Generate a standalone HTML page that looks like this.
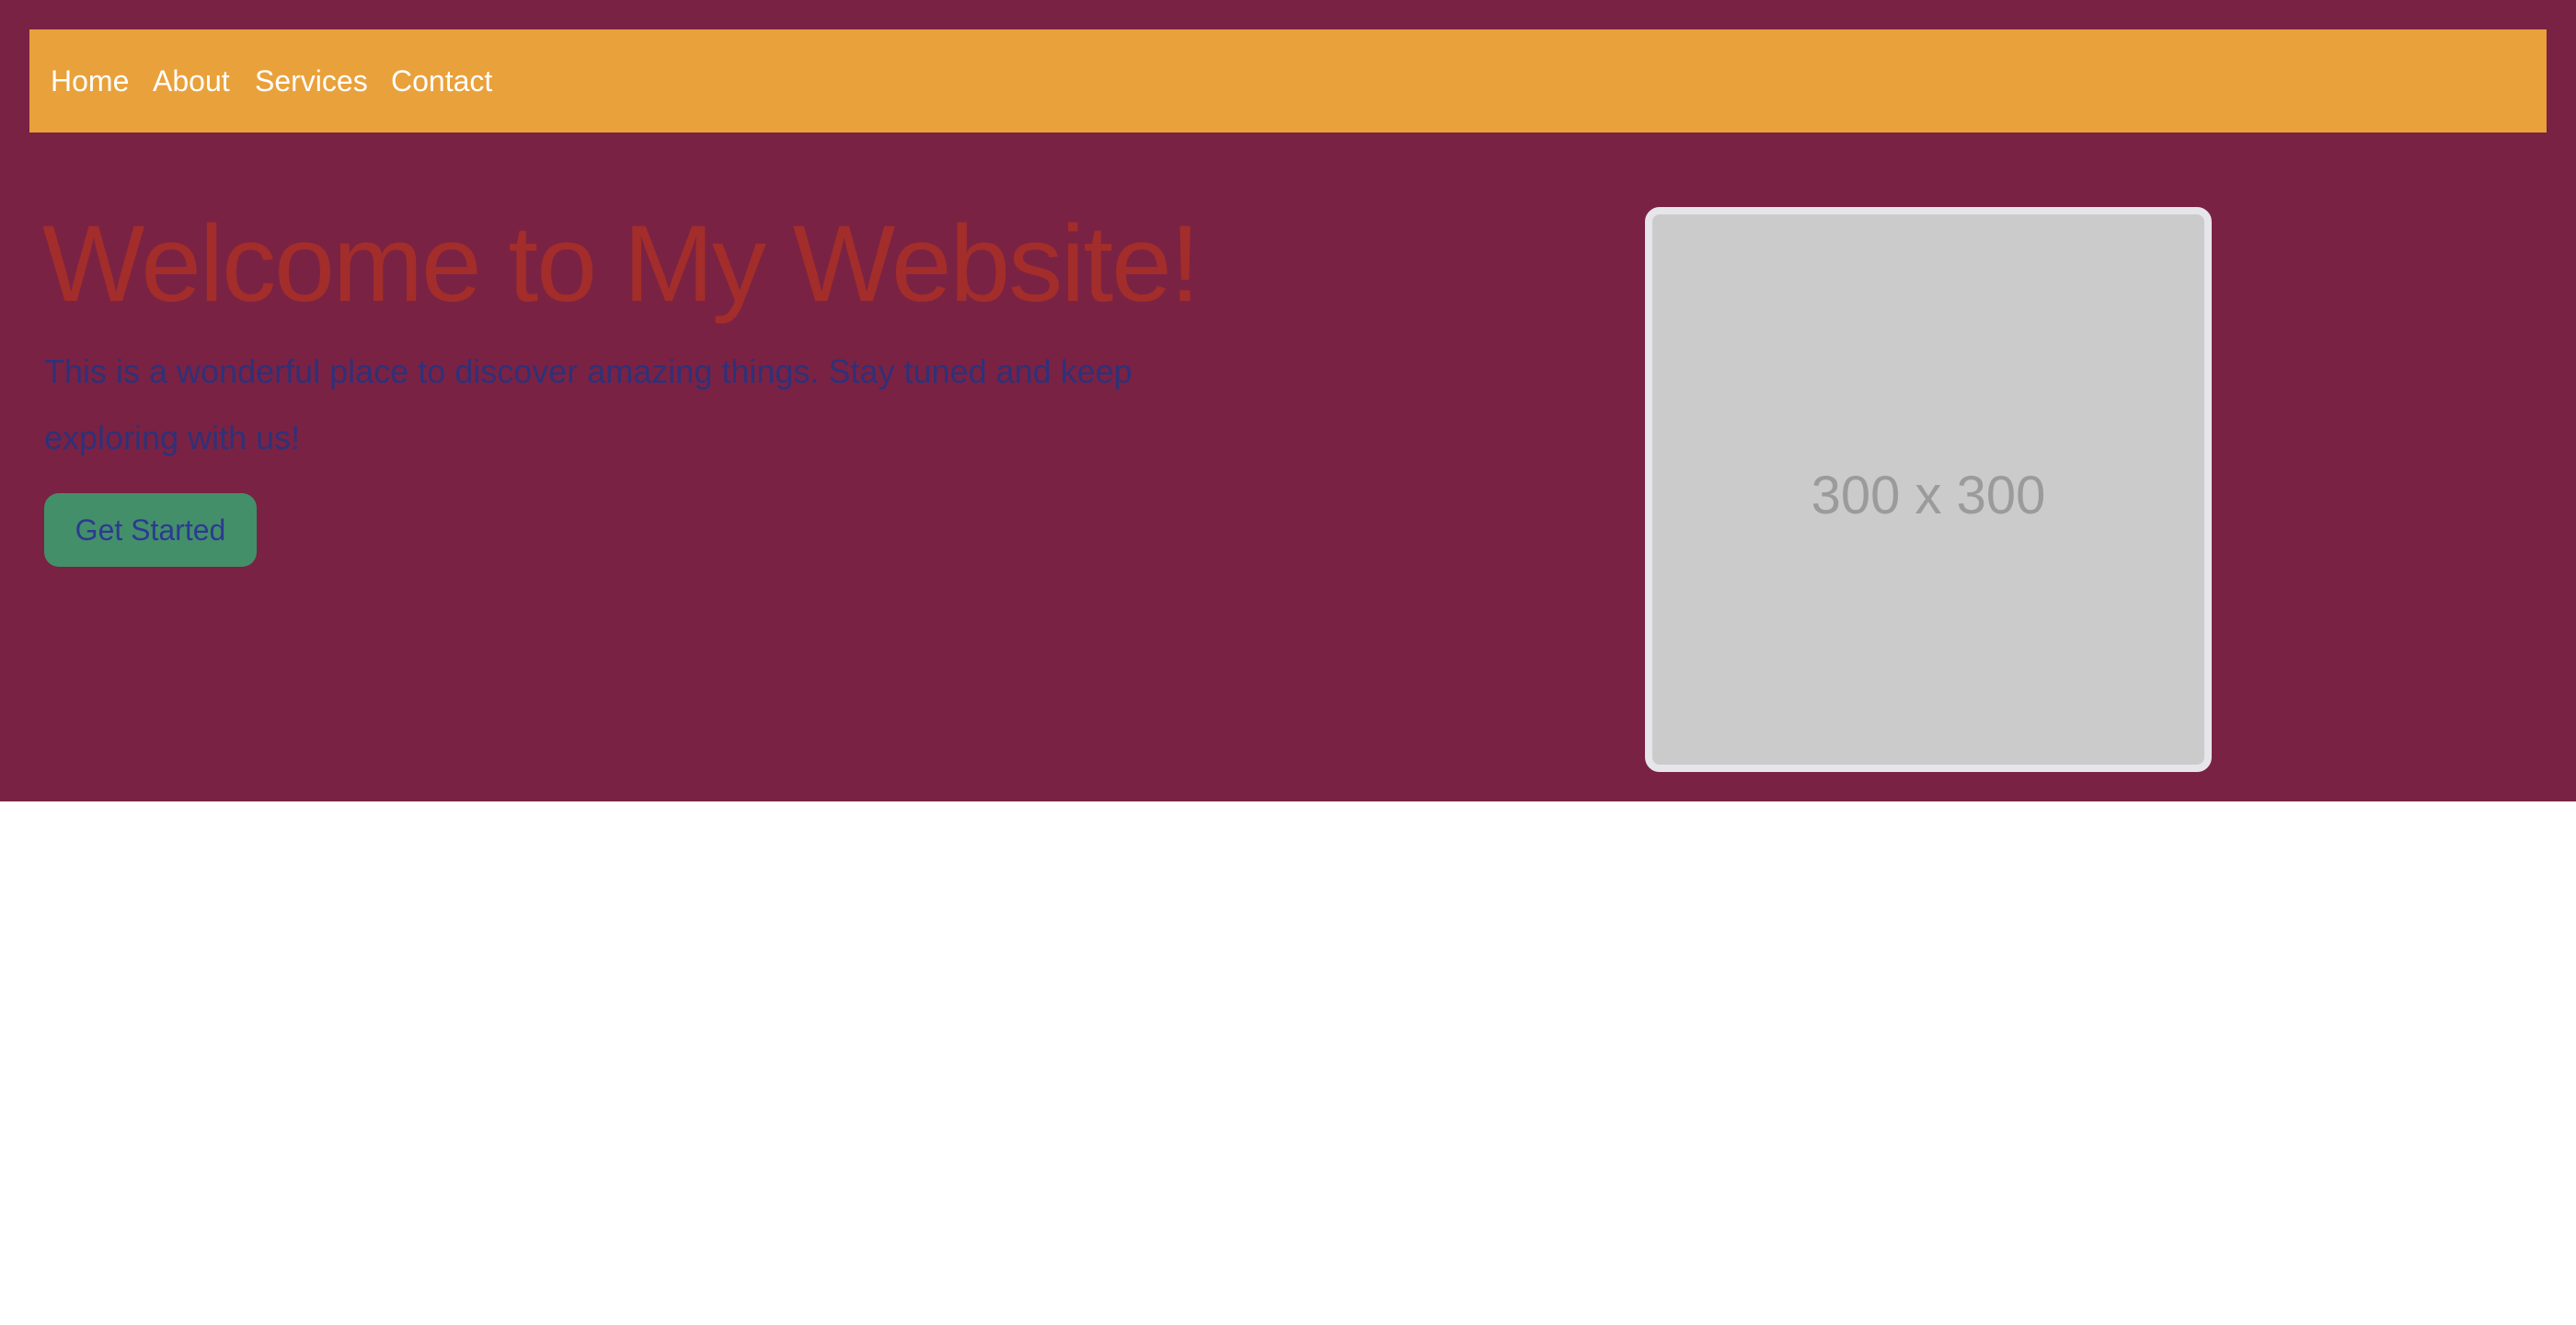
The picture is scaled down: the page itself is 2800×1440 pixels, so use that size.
<!DOCTYPE html>
<html><head><style>
html,body{margin:0;padding:0;background:#fff;width:2800px;height:1440px;overflow:hidden;font-family:"Liberation Sans",sans-serif}
.hero{position:absolute;left:0;top:0;width:2800px;height:871px;background:#7a2243}
.nav{position:absolute;left:32px;top:32px;width:2736px;height:112px;background:#e9a13b}
.nav span{position:absolute;top:38px;color:#fff;font-size:32px;line-height:36px}
h1{position:absolute;left:46px;top:212px;margin:0;font-weight:normal;font-size:118px;line-height:150px;color:#a32d2a;white-space:nowrap;letter-spacing:-2px}
p{position:absolute;left:48px;top:368px;margin:0;width:1300px;font-size:36px;line-height:72px;color:#2f3178;letter-spacing:0}
.btn{position:absolute;left:48px;top:536px;width:231px;height:80px;border-radius:16px;background:#438f6a;color:#2c3a92;font-size:32px;line-height:80px;text-align:center}
.img{position:absolute;left:1788px;top:225px;width:600px;height:598px;border:8px solid #e6e5ea;border-radius:16px;background:#cbcbcb;color:#9b9b9b;font-size:58px;text-align:center;line-height:612px}
</style></head><body>
<div class="hero">
<div class="nav"><span style="left:23px">Home</span><span style="left:134px">About</span><span style="left:245px">Services</span><span style="left:393px">Contact</span></div>
<h1>Welcome to My Website!</h1>
<p>This is a wonderful place to discover amazing things. Stay tuned and keep<br>exploring with us!</p>
<div class="btn">Get Started</div>
<div class="img">300 x 300</div>
</div>
</body></html>
